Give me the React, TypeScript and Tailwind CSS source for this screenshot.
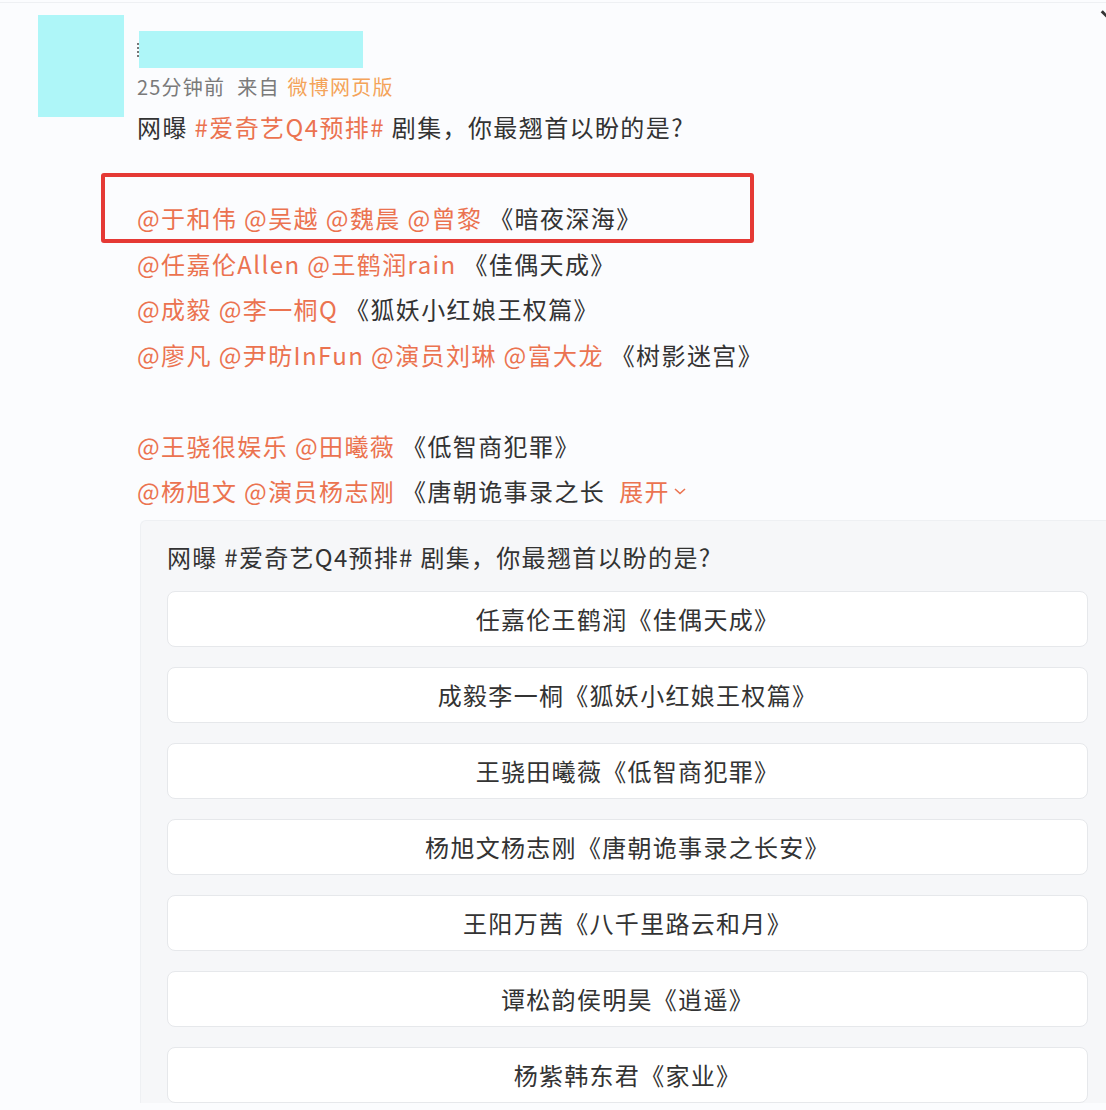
import React from 'react';

const FONT = { fontFamily: '"Noto Sans CJK SC", "Noto Sans", "Liberation Sans", sans-serif' };

type Line = { mentions: string[]; title: string; more?: boolean } | null;

const lines: Line[] = [
  null,
  { mentions: ['于和伟', '吴越', '魏晨', '曾黎'], title: '《暗夜深海》' },
  { mentions: ['任嘉伦Allen', '王鹤润rain'], title: '《佳偶天成》' },
  { mentions: ['成毅', '李一桐Q'], title: '《狐妖小红娘王权篇》' },
  { mentions: ['廖凡', '尹昉InFun', '演员刘琳', '富大龙'], title: '《树影迷宫》' },
  null,
  { mentions: ['王骁很娱乐', '田曦薇'], title: '《低智商犯罪》' },
  { mentions: ['杨旭文', '演员杨志刚'], title: '《唐朝诡事录之长', more: true },
];

const options = [
  '任嘉伦王鹤润《佳偶天成》',
  '成毅李一桐《狐妖小红娘王权篇》',
  '王骁田曦薇《低智商犯罪》',
  '杨旭文杨志刚《唐朝诡事录之长安》',
  '王阳万茜《八千里路云和月》',
  '谭松韵侯明昊《逍遥》',
  '杨紫韩东君《家业》',
];

export default function App() {
  return (
    <div className="relative w-[1106px] h-[1110px] overflow-hidden bg-[#fbfcfe] text-[#333]" style={FONT}>
      <div className="h-[3px] border-b border-[#eef0f3]"></div>

      {/* corner chevron, cut off by the edge */}
      <div className="absolute top-[14px] right-[-6px] w-[12px] h-[3px] bg-[#333] rotate-45"></div>

      <div className="flex pl-[38px] pt-[12px]">
        <div className="w-[86px] h-[102px] bg-[#aef6f8] shrink-0"></div>

        <div className="ml-[13px] flex-1">
          <div className="flex items-center mt-[16px]">
            <div className="w-[2px] h-[14px] border-l-2 border-dotted border-[#777]"></div>
            <div className="w-[224px] h-[37px] bg-[#aef6f8]"></div>
          </div>

          <div className="mt-[7px] h-[24px] leading-[24px] text-[20px] text-[#7a7a7a] tracking-[1.2px]">
            25分钟前<span className="ml-[12px]">来自</span>
            <span className="ml-[8px] text-[#f4a45a]">微博网页版</span>
          </div>

          <div className="mt-[5px] text-[24px] leading-[45.5px] tracking-[1.4px]">
            <div>
              网曝 <span className="text-[#eb7350]">#爱奇艺Q4预排#</span> 剧集，你最翘首以盼的是?
            </div>
            {lines.map((l, i) =>
              l === null ? (
                <div key={i} className="h-[45.5px]"></div>
              ) : (
                <div key={i} className="whitespace-nowrap">
                  {l.mentions.map((m, j) => (
                    <span key={j} className="text-[#eb7350]">
                      @{m}{' '}
                    </span>
                  ))}
                  <span>{l.title}</span>
                  {l.more && (
                    <span className="ml-[14px] text-[#eb7350] inline-flex items-center">
                      展开
                      <svg width="16" height="16" viewBox="0 0 16 16" className="ml-[2px]">
                        <path d="M3 6l5 4.5L13 6" fill="none" stroke="#eb7350" strokeWidth="1.6" />
                      </svg>
                    </span>
                  )}
                </div>
              )
            )}
          </div>
        </div>
      </div>

      {/* red highlight frame */}
      <div className="absolute left-[101px] top-[173px] w-[653px] h-[70px] border-[4px] border-[#e53935] rounded-[3px]"></div>

      <div className="ml-[140px] mt-[6px] bg-[#f6f7f9] border-l border-t border-[#eef0f3] rounded-tl-[6px] pl-[26px] pr-[18px] pt-[22px] tracking-[1.3px]">
        <div className="text-[24px] leading-[28px]">网曝 #爱奇艺Q4预排# 剧集，你最翘首以盼的是?</div>
        <div className="mt-[20px] flex flex-col gap-[20px]">
          {options.map((o) => (
            <div
              key={o}
              className="h-[56px] shrink-0 flex items-center justify-center bg-white border border-[#e6e8eb] rounded-[8px] text-[24px]"
            >
              {o}
            </div>
          ))}
        </div>
      </div>
    </div>
  );
}
